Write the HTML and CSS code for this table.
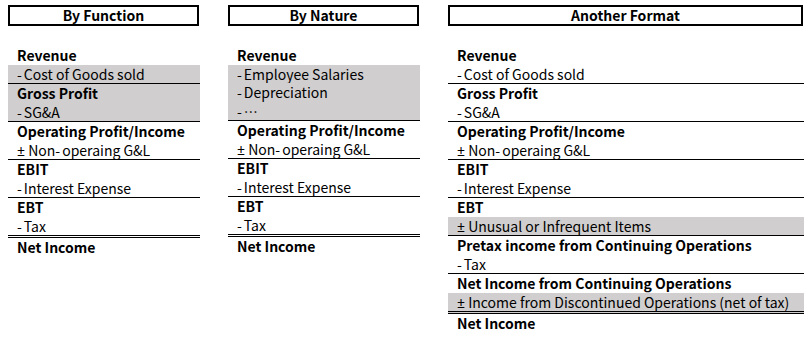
FILE: index.html
```html
<!DOCTYPE html>
<html>
<head>
<meta charset="utf-8">
<link rel="stylesheet" href="styles.css">
</head>
<body>
<div class="page">
  <div class="col narrow">
    <div class="head">By Function</div>
    <div class="rows">
      <div class="row b">Revenue</div>
      <div class="row shade line"><span class="dash">-</span>Cost of Goods sold</div>
      <div class="row b shade">Gross Profit</div>
      <div class="row shade line"><span class="dash">-</span>SG&amp;A</div>
      <div class="row b">Operating Profit/Income</div>
      <div class="row line"><span class="pm">±</span> Non<span class="dash">-</span>operaing G&amp;L</div>
      <div class="row b">EBIT</div>
      <div class="row line"><span class="dash">-</span>Interest Expense</div>
      <div class="row b">EBT</div>
      <div class="row dbl"><span class="dash">-</span>Tax</div>
      <div class="row b">Net Income</div>
    </div>
  </div>
  <div class="col narrow">
    <div class="head">By Nature</div>
    <div class="rows">
      <div class="row b">Revenue</div>
      <div class="row shade"><span class="dash">-</span>Employee Salaries</div>
      <div class="row shade"><span class="dash">-</span>Depreciation</div>
      <div class="row shade line"><span class="dash">-</span>…</div>
      <div class="row b">Operating Profit/Income</div>
      <div class="row line"><span class="pm">±</span> Non<span class="dash">-</span>operaing G&amp;L</div>
      <div class="row b">EBIT</div>
      <div class="row line"><span class="dash">-</span>Interest Expense</div>
      <div class="row b">EBT</div>
      <div class="row dbl"><span class="dash">-</span>Tax</div>
      <div class="row b">Net Income</div>
    </div>
  </div>
  <div class="col wide">
    <div class="head">Another Format</div>
    <div class="rows">
      <div class="row b">Revenue</div>
      <div class="row line"><span class="dash">-</span>Cost of Goods sold</div>
      <div class="row b">Gross Profit</div>
      <div class="row line"><span class="dash">-</span>SG&amp;A</div>
      <div class="row b">Operating Profit/Income</div>
      <div class="row line"><span class="pm">±</span> Non<span class="dash">-</span>operaing G&amp;L</div>
      <div class="row b">EBIT</div>
      <div class="row line"><span class="dash">-</span>Interest Expense</div>
      <div class="row b">EBT</div>
      <div class="row shade line"><span class="pm">±</span> Unusual or Infrequent Items</div>
      <div class="row b">Pretax income from Continuing Operations</div>
      <div class="row line"><span class="dash">-</span>Tax</div>
      <div class="row b">Net Income from Continuing Operations</div>
      <div class="row shade dbl"><span class="pm">±</span> Income from Discontinued Operations (net of tax)</div>
      <div class="row b">Net Income</div>
    </div>
  </div>
</div>
</body>
</html>
```
FILE: styles.css
```css
html, body {
  margin: 0;
  padding: 0;
  background: #ffffff;
}

body {
  font-family: "Noto Sans CJK SC", "Noto Sans", sans-serif;
  font-size: 14px;
  color: #000000;
}

.page {
  display: flex;
  gap: 28px;
  padding: 5px 0 0 8px;
}

.col {
  display: flex;
  flex-direction: column;
}

.narrow {
  width: 192px;
}

.wide {
  width: 356px;
}

.head {
  box-sizing: border-box;
  height: 21px;
  width: calc(100% - 1px);
  border: 2px solid #000000;
  text-align: center;
  font-weight: 700;
  line-height: 17px;
  font-size: 14px;
}

.rows {
  margin-top: 20px;
  display: flex;
  flex-direction: column;
}

.row {
  height: 18.5px;
  line-height: 18.5px;
  padding-left: 9px;
  white-space: nowrap;
  font-weight: 400;
}

.b {
  font-weight: 700;
}

.shade {
  background: #d0cece;
}

.line {
  border-bottom: 1px solid #000000;
}

.dbl {
  border-bottom: 3px double #000000;
}

.dash {
  display: inline-block;
  padding: 0 2px 0 0;
}

.pm {
  font-family: "Noto Sans", sans-serif;
}
```
